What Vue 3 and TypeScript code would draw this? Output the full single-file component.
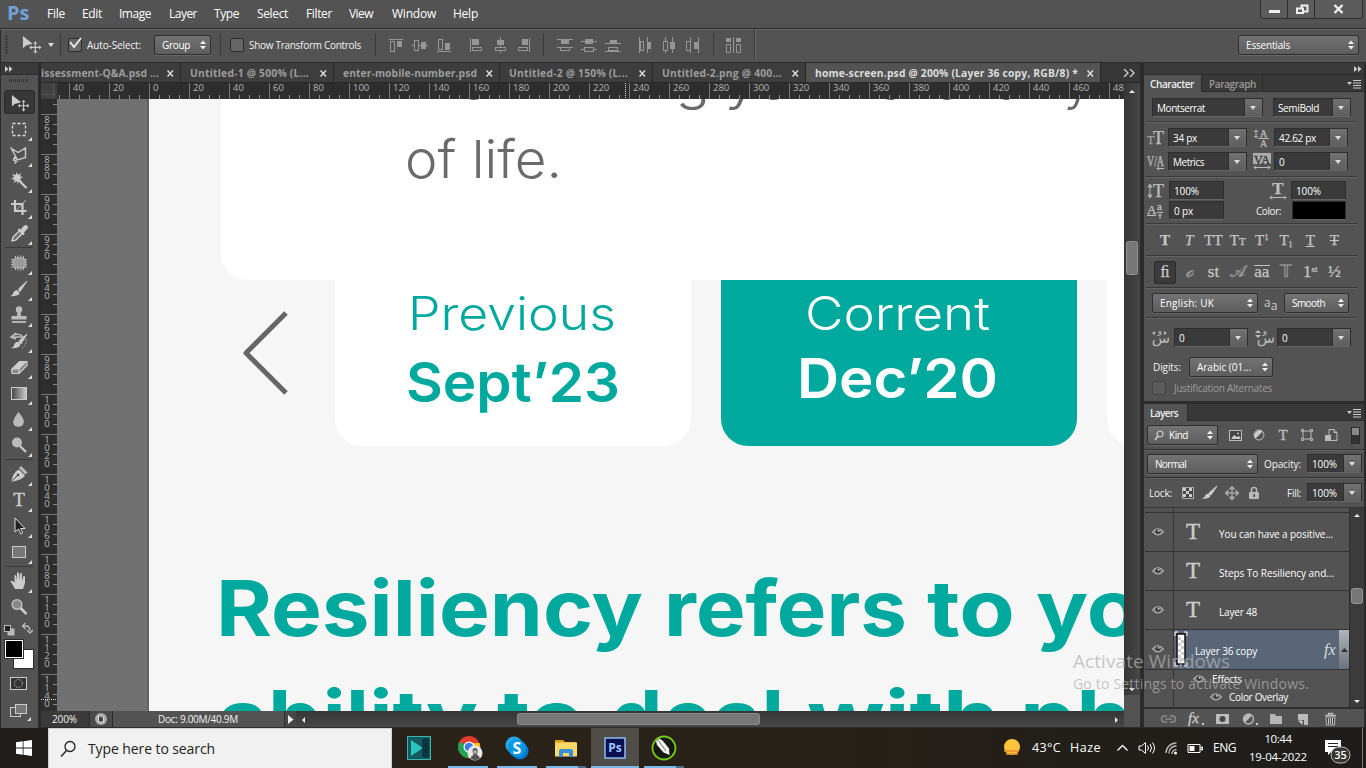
<script setup lang="ts">
import type { ObjectDirective } from 'vue'

// Adjusts tracking so a label occupies exactly the given width.
const vFit: ObjectDirective<HTMLElement, number> = {
  mounted(el, { value }) {
    const natural = el.getBoundingClientRect().width
    const count = (el.textContent ?? '').length
    if (count > 1) el.style.letterSpacing = `${(value - natural) / count}px`
  },
}

const menus = [
  { t: 'File', cell: 35, w: 18 }, { t: 'Edit', cell: 37, w: 20 }, { t: 'Image', cell: 50, w: 32 },
  { t: 'Layer', cell: 45, w: 28 }, { t: 'Type', cell: 43, w: 25 }, { t: 'Select', cell: 49, w: 31 },
  { t: 'Filter', cell: 43, w: 26 }, { t: 'View', cell: 43, w: 24 }, { t: 'Window', cell: 61, w: 44 },
  { t: 'Help', cell: 40, w: 25 },
]
const tabs = [
  { t: 'issessment-Q&A.psd ...', cell: 140, w: 118 },
  { t: 'Untitled-1 @ 500% (L...', cell: 153, w: 119 },
  { t: 'enter-mobile-number.psd', cell: 166, w: 134 },
  { t: 'Untitled-2 @ 150% (L...', cell: 153, w: 119 },
  { t: 'Untitled-2.png @ 400...', cell: 153, w: 120 },
  { t: 'home-screen.psd @ 200% (Layer 36 copy, RGB/8) *', cell: 295, w: 263 },
]
const hMajor = Array.from({ length: 27 }, (_, i) => ({ x: 28 + i * 40, t: String(Math.abs(i * 20 - 40)) }))
const hMinor = Array.from({ length: 108 }, (_, i) => 18 + i * 10)
const vMajor = Array.from({ length: 15 }, (_, i) => ({ y: 15 + i * 40, d: String(860 + i * 20).split('') }))
const vMinor = Array.from({ length: 61 }, (_, i) => 5 + i * 10)

// Artboard copy; len is the rendered advance of each word.
const words = [
  { t: 'Maximizing', x: 410, y: 99, len: 300, c: 'copy' }, { t: 'your', x: 725, y: 99, len: 121, c: 'copy' },
  { t: 'economy', x: 875, y: 99, len: 217, c: 'copy' }, { t: 'of life.', x: 405, y: 178, len: 157, c: 'copy' },
  { t: 'Previous', x: 408, y: 330, len: 208, c: 'label teal' }, { t: 'Corrent', x: 805, y: 330, len: 185, c: 'label white' },
  { t: 'Sept’23', x: 406, y: 402, len: 214, c: 'date teal' }, { t: 'Dec’20', x: 797, y: 398, len: 201, c: 'date white' },
  { t: 'Resiliency', x: 216, y: 636, len: 427, c: 'title' }, { t: 'refers', x: 664, y: 636, len: 243, c: 'title' },
  { t: 'to', x: 927, y: 636, len: 88, c: 'title' }, { t: 'yo', x: 1036, y: 636, len: 104, c: 'title' },
  { t: 'ability', x: 218, y: 746, len: 260, c: 'title' }, { t: 'to', x: 497, y: 746, len: 87, c: 'title' },
  { t: 'deal', x: 610, y: 746, len: 174, c: 'title' }, { t: 'with', x: 807, y: 746, len: 193, c: 'title' },
  { t: 'ph', x: 1020, y: 746, len: 112, c: 'title' },
]

const move = '<path d="M1 1v13l3.200-3 7 -1.800z" fill="#ccc"/><path d="M14 8v10M9 13h10" stroke="#ccc" stroke-width="1.200"/><path d="M14 6.600l2.200 2.400h-4.400zM14 19.400l2.200-2.400h-4.400zM7.600 13l2.400-2.200v4.400zM20.400 13l-2.400-2.200v4.400z" fill="#ccc"/>'
const tools: { k: string; svg: string; corner?: boolean; active?: boolean; sep?: string }[] = [
  { k: 'move', active: true, svg: move },
  { k: 'marquee', corner: true, svg: '<rect x="2.500" y="4.500" width="13" height="12" fill="none" stroke="#ddd" stroke-width="1.300" stroke-dasharray="3 2"/>' },
  { k: 'lasso', corner: true, svg: '<path d="M1.500 3.500l6.500 4 7.500-4.500v9.500l-8 2.500zM7 14.500l-2.500-2-1 2.500 3 1.500-2 2" fill="none" stroke="#ccc" stroke-width="1.400"/>' },
  { k: 'wand', corner: true, svg: '<path d="M7 1l1 3 3-2-1 3.500 3 .500-3 2 2 3-3.500-1L8 13l-1.500-3L4 12l.500-3.500L1 8l3-2-2-3 3.500 1z" fill="#ccc"/><path d="M9 9.500l7.500 7.500" stroke="#ccc" stroke-width="2.200"/>' },
  { k: 'crop', corner: true, svg: '<path d="M5 3v11h11.500M1 7h11.500v11" fill="none" stroke="#ccc" stroke-width="2.200"/><path d="M6 13.500L16 3" stroke="#bbb" stroke-width="1"/>' },
  { k: 'dropper', corner: true, svg: '<path d="M2 18l1-4 6.500-6.500 3 3-6.500 6.500z" fill="#777" stroke="#ddd" stroke-width="1.200"/><path d="M8.500 6l5.500 5.500M11 8l3.500-4.500q2-1 2.500 1L13 9" stroke="#ccc" stroke-width="2.200" fill="#ccc"/>' },
  { k: 'heal', corner: true, sep: 's1', svg: '<path d="M5.500 3v14M8 2.500v15M11 2.500v15M13.500 3v14M1 6.500h16M1 9h16M1 11.500h16M1 14h16" stroke="#bbb" stroke-width="1.100"/><rect x="3" y="5" width="12.500" height="10" rx="4" fill="#999" stroke="#bbb"/>' },
  { k: 'brush', corner: true, svg: '<path d="M17 2L8.500 10l1.500 2.500z" fill="#ccc" stroke="#ccc"/><path d="M8 11.500q2 2 1 4-4 2.500-9 1.500 3-1 3.500-3.500 1.500-3 4.500-2z" fill="#ccc"/>' },
  { k: 'stamp', corner: true, svg: '<circle cx="9" cy="4.500" r="3.200" fill="#bbb"/><path d="M7.500 6h3l.500 5h5.500v3.500h-15V11H7z" fill="#bbb"/><path d="M2 17h14" stroke="#ccc" stroke-width="1.600"/>' },
  { k: 'history', corner: true, svg: '<path d="M17 3l-8 7 2 3z" fill="#ccc" stroke="#ccc"/><path d="M9 11q2 2 1 4-4 3-9 2 3-1 3.500-4 1.500-3 4.500-2z" fill="#ccc"/><path d="M2 6h11q-3-4-9-2M6 2L1 6l5 2" fill="none" stroke="#bbb" stroke-width="1.500"/><path d="M16 8q1 6-4 9" stroke="#bbb" stroke-dasharray="1.500 1.500" fill="none"/>' },
  { k: 'eraser', corner: true, svg: '<path d="M1.500 12.500l8-8h7.500v4l-8 8H2z" fill="#888" stroke="#ccc" stroke-width="1.200"/><path d="M1.500 12.500l8-8h7.500l-8 8z" fill="#ccc"/><path d="M9 12.500v4" stroke="#ddd"/>' },
  { k: 'gradient', corner: true, svg: '<defs><linearGradient id="gr"><stop stop-color="#444"/><stop offset="1" stop-color="#ccc"/></linearGradient></defs><rect x="1.500" y="4.500" width="15" height="12" fill="url(#gr)" stroke="#ccc"/>' },
  { k: 'blur', corner: true, svg: '<path d="M8.500 3q6 7 5.200 10.500a5.300 5 0 0 1-10.500 0Q3 10 8.500 3z" fill="#bbb"/>' },
  { k: 'dodge', corner: true, svg: '<circle cx="7" cy="7.500" r="5" fill="#bbb"/><path d="M10 11l6 6" stroke="#ccc" stroke-width="2.200"/>' },
  { k: 'pen', corner: true, sep: 's2', svg: '<path d="M1 18Q3 8 9 5.500l6 6Q12 16 1 18z" fill="#ccc"/><path d="M1.500 17.500l6-6" stroke="#444"/><circle cx="8" cy="11" r="1.300" fill="#444"/><path d="M10 3l6.500 6.500" stroke="#bbb" stroke-width="3"/>' },
  { k: 'type', corner: true, svg: '<text x="9" y="16" text-anchor="middle" font-family="Liberation Serif, serif" font-size="19" fill="#d0d0d0" stroke="#d0d0d0" stroke-width=".3">T</text>' },
  { k: 'select', corner: true, svg: '<path d="M5 2v14l3.500-3 2.200 5 2-1-2-4.500H15z" fill="#222" stroke="#ddd"/>' },
  { k: 'shape', corner: true, svg: '<rect x="2.500" y="4.500" width="13" height="11" fill="#777" stroke="#ccc"/>' },
  { k: 'hand', corner: true, sep: 's3', svg: '<path d="M5 18Q3 14 .5 10.500q1-2 4 1V5q0-1.500 1.700-.5l.8 5V2q1-1.500 2 0v7l1-6.500q1.500-1 2 .5v7l1.500-5q1.500-.5 1.500 1V12l-2 6z" fill="#ccc"/>' },
  { k: 'zoom', svg: '<circle cx="7" cy="7.500" r="4.800" fill="#888" stroke="#bbb" stroke-width="1.600"/><path d="M10.500 11l6 6" stroke="#ccc" stroke-width="2.500"/>' },
]

const S = 'fill="none" stroke="#969696"'
const F = 'fill="#969696"'
const aligns = [
  [`<path d="M1 2.500h14" ${S}/><rect x="2.500" y="4.500" width="4" height="10" ${S}/><rect x="9" y="4" width="5" height="6" ${F}/>`,
   `<path d="M0 8.500h16" ${S}/><rect x="2.500" y="3.500" width="4" height="10" fill="#535353" stroke="#969696"/><rect x="9" y="5" width="5" height="7" ${F}/>`,
   `<path d="M1 14.500h14" ${S}/><rect x="2.500" y="2.500" width="4" height="10" ${S}/><rect x="9" y="6" width="5" height="7" ${F}/>`],
  [`<path d="M2.500 1v14" ${S}/><rect x="4" y="2" width="7" height="6" ${F}/><rect x="4.500" y="10.500" width="9" height="3" ${S}/>`,
   `<path d="M8.500 0v16" ${S}/><rect x="5" y="3" width="7" height="5" ${F}/><rect x="3.500" y="10.500" width="10" height="3" fill="#535353" stroke="#969696"/>`,
   `<path d="M13.500 1v14" ${S}/><rect x="6" y="2" width="6" height="6" ${F}/><rect x="2.500" y="10.500" width="9" height="3" ${S}/>`],
  [`<path d="M0 2.500h16M0 10.500h16" ${S}/><rect x="4" y="3" width="8" height="4" ${F}/><rect x="3.500" y="10.500" width="9" height="3" ${S}/>`,
   `<path d="M0 4.500h16M0 12.500h16" ${S}/><rect x="4" y="2" width="8" height="5" ${F}/><rect x="3.500" y="10.500" width="9" height="4" fill="#535353" stroke="#969696"/>`,
   `<path d="M0 6.500h16M0 14.500h16" ${S}/><rect x="5" y="3" width="7" height="4" ${F}/><rect x="3.500" y="10.500" width="9" height="3" ${S}/>`],
  [`<path d="M2.500 0v16M10.500 0v16" ${S}/><rect x="3.500" y="4.500" width="3" height="9" ${S}/><rect x="11" y="5" width="3" height="7" ${F}/>`,
   `<path d="M4.500 0v16M11.500 0v16" ${S}/><rect x="2.500" y="4.500" width="4" height="9" fill="#535353" stroke="#969696"/><rect x="9" y="5" width="5" height="7" ${F}/>`,
   `<path d="M5.500 0v16M13.500 0v16" ${S}/><rect x="1.500" y="4.500" width="4" height="9" ${S}/><rect x="9" y="5" width="4" height="7" ${F}/>`],
  [`<path d="M8.500 0v16" ${S}/><rect x="1" y="1" width="5" height="4" ${F}/><rect x="11" y="1" width="5" height="4" ${F}/><path d="M1.500 7.500h4v8h-4zM11.500 7.500h4v8h-4z" ${S}/>`],
]
const layers = [
  { t: 'You can have a positive...', w: 114 },
  { t: 'Steps To Resiliency and...', w: 115 },
  { t: 'Layer 48', w: 38 },
]
const filterIcons = [
  '<rect x="2.500" y="3.500" width="12" height="10" fill="#444" stroke="#bbb"/><path d="M4 12l3-4 3 2 2-1 2 3z" fill="#ccc"/><circle cx="11" cy="6.500" r="1" fill="#ccc"/>',
  '<circle cx="8" cy="8" r="5" fill="#555" stroke="#bbb"/><path d="M4.500 11.500A5 5 0 0 1 11.500 4.500z" fill="#ccc"/>',
  '<text x="8" y="13" text-anchor="middle" font-family="Liberation Serif" font-size="15" fill="#bbb" stroke="#bbb" stroke-width=".4">T</text>',
  '<path d="M4 4h8v8H4z" fill="none" stroke="#bbb"/><path d="M2.500 2.500h2v2h-2zM11.500 2.500h2v2h-2zM2.500 11.500h2v2h-2zM11.500 11.500h2v2h-2z" fill="#535353" stroke="#bbb"/>',
  '<path d="M6 8V2.500h5l3 3v8H8" fill="none" stroke="#bbb"/><path d="M11 2.500v3h3" fill="none" stroke="#bbb"/><rect x="2" y="8" width="6" height="6" fill="#bbb"/>',
]
const lockIcons = [
  '<rect x="2.500" y="2.500" width="11" height="11" fill="#444" stroke="#aaa"/><path d="M3 3h3v3H3zM9 3h3v3H9zM6 6h3v3H6zM3 9h3v3H3zM9 9h3v3H9z" fill="#ccc"/>',
  '<path d="M15 1L7 8l2 2z" fill="#ccc" stroke="#ccc"/><path d="M7 8.500q2 1.500 1 3.500-3 2.500-8 1.500 3-1 3.500-3.500 1.500-2 3.500-1.500z" fill="#ccc"/>',
  '<path d="M8 2v12M2 8h12" stroke="#bbb"/><path d="M8 1l2.500 3h-5zM8 15l2.500-3h-5zM1 8l3-2.500v5zM15 8l-3-2.500v5z" fill="none" stroke="#bbb"/>',
  '<path d="M5.500 7V4.500q0-2 2.500-2t2.500 2V7" fill="none" stroke="#bbb" stroke-width="1.500"/><rect x="3" y="7" width="10" height="7" rx="1" fill="#bbb"/><rect x="7.500" y="9" width="1.500" height="3" fill="#444"/>',
]
const footIcons = [
  '<path d="M7 5H4.500a3 3 0 0 0 0 6H7M10 5h2.500a3 3 0 0 1 0 6H10M5 8h7" fill="none" stroke="#8a8a8a" stroke-width="1.400"/>',
  '<text x="1" y="12" font-family="Liberation Serif" font-style="italic" font-size="15" fill="#ccc" stroke="#ccc" stroke-width=".3">fx</text><rect x="15" y="12" width="2" height="2" fill="#ccc"/>',
  '<rect x="2" y="3" width="13" height="10" fill="#bbb"/><circle cx="8.500" cy="8" r="3" fill="#444"/>',
  '<circle cx="7.500" cy="8" r="5" fill="#555" stroke="#bbb" stroke-width="1.300"/><path d="M4 11.500A5 5 0 0 1 11 4.500z" fill="#bbb"/><rect x="15" y="12" width="2" height="2" fill="#ccc"/>',
  '<path d="M2 13V3h5l1 2h6v8z" fill="#b5b5b5"/>',
  '<path d="M3 3h10v11H9v-5H3z" fill="#bbb"/><path d="M3 9.500h4.500V14z" fill="#ccc"/>',
  '<path d="M3 4.500h11M6.500 4V2.500h4V4" fill="none" stroke="#bbb" stroke-width="1.300"/><path d="M4 6h9l-.5 8h-8z" fill="#444" stroke="#bbb"/><path d="M6.500 7v6M8.500 7v6M10.500 7v6" stroke="#ccc"/>',
]
const eye = '<path d="M1.500 6Q7 -.5 12.500 6 7 12 1.500 6z" fill="#777" stroke="#b8b8b8" stroke-width="1.100"/><circle cx="7" cy="5.500" r="2.300" fill="#333"/><circle cx="7.600" cy="4.800" r="1" fill="#ddd"/>'

const serif = 'font-family="Liberation Serif, serif" fill="#c0c0c0" stroke="#c0c0c0" stroke-width=".25"'
const sizeIcon = `<text x="0" y="15" ${serif} font-size="12" opacity=".75">T</text><text x="6" y="15" ${serif} font-size="18">T</text>`
const leadIcon = `<text x="7" y="8" ${serif} font-size="10">A</text><text x="7" y="18" ${serif} font-size="10">A</text><path d="M3 2v6M1 3l2-2 2 2M1 7l2 2 2-2M5 9.500h11" fill="none" stroke="#bbb"/>`
const kernIcon = `<text x="0" y="13" ${serif} font-size="15" textLength="17" lengthAdjust="spacingAndGlyphs">V/A</text><path d="M10 15.500h7M12 13.500l-2 2 2 2" fill="none" stroke="#bbb"/>`
const trackIcon = `<rect x="0" y="0" width="18" height="11" fill="#aaa"/><text x="1" y="10.500" font-family="Liberation Serif" font-size="13" fill="#333" stroke="#333" stroke-width=".3" textLength="16" lengthAdjust="spacingAndGlyphs">VA</text><path d="M1 14.500h16M3 12.500l-2 2 2 2M15 12.500l2 2-2 2" fill="none" stroke="#bbb"/>`
const vscaleIcon = `<path d="M3 3v12M1 5l2-3 2 3zM1 13l2 3 2-3z" stroke="#bbb" fill="none"/><text x="6" y="15" ${serif} font-size="18">T</text>`
const hscaleIcon = `<text x="9" y="12" text-anchor="middle" ${serif} font-size="17" font-weight="bold">T</text><path d="M1 15.500h16M3 13.500l-2 2 2 2M15 13.500l2 2-2 2" fill="none" stroke="#bbb"/>`
const baseIcon = `<text x="0" y="12" ${serif} font-size="13">A</text><text x="10" y="8" ${serif} font-size="11">a</text><path d="M0 13.500h9M10 10.500h6M13 17v-5M11.500 14l1.500-2 1.500 2" fill="none" stroke="#bbb"/>`
const arab1 = '<text x="9" y="14" text-anchor="middle" font-family="DejaVu Sans" font-size="15" fill="#bbb">س</text><text x="8" y="5" text-anchor="middle" font-family="DejaVu Sans" font-size="9" fill="#bbb">و</text><path d="M0 4l3-2v4zM15 4l-3-2v4z" fill="#bbb"/>'
const arab2 = '<text x="11" y="14" text-anchor="middle" font-family="DejaVu Sans" font-size="15" fill="#bbb">س</text><text x="10" y="5" text-anchor="middle" font-family="DejaVu Sans" font-size="9" fill="#bbb">و</text><path d="M0 4h6l-3-3zM0 6h6l-3 3z" fill="#bbb"/>'
</script>

<template>
  <div class="screen">
    <header class="menubar">
      <span class="logo" v-fit="21">Ps</span>
      <div v-for="m in menus" :key="m.t" class="menu" :style="{ width: m.cell + 'px' }"><span v-fit="m.w">{{ m.t }}</span></div>
      <div class="wincontrols">
        <svg width="103" height="19"><path d="M.5 0v16q0 2.500 2.500 2.500h97q2.500 0 2.500-2.500V0" fill="#5c5c5c" stroke="#2e2e2e" /><path d="M27.500 0v18M54.500 0v18" stroke="#2e2e2e" /><path d="M9 11.500h11" stroke="#eee" stroke-width="3" /><path d="M41.500 5.500h6v6h-6z" fill="none" stroke="#eee" stroke-width="2" /><path d="M37 8.500h6v4.500h-6z" fill="#5c5c5c" stroke="#eee" stroke-width="2" /><path d="M74.500 5l8 8M82.500 5l-8 8" stroke="#eee" stroke-width="2.400" /></svg>
      </div>
    </header>

    <section class="options">
      <i class="grip"></i>
      <svg class="mv" width="20" height="20" viewBox="0 0 21 21" v-html="move" />
      <svg class="caret" width="7" height="4"><path d="M0 0h6L3 4z" fill="#ddd" /></svg>
      <i class="vsep a"></i>
      <span class="check"><svg width="14" height="14"><path d="M2 5l4 5 7-9" fill="none" stroke="#eee" stroke-width="1.800" /></svg></span>
      <span class="lab l1"><span v-fit="54">Auto-Select:</span></span>
      <span class="sel group"><span v-fit="28">Group</span><svg width="6" height="10"><path d="M0 4h6L3 .500zM0 6h6L3 9.500z" fill="#eee" /></svg></span>
      <i class="vsep b"></i>
      <span class="check c2"></span>
      <span class="lab l2"><span v-fit="112">Show Transform Controls</span></span>
      <i class="vsep c"></i>
      <template v-for="(g, gi) in aligns" :key="gi">
        <div class="agroup" :class="'g' + gi"><svg v-for="(s, i) in g" :key="i" width="16" height="16" v-html="s" /></div>
        <i v-if="gi === 1 || gi === 3" class="vsep g"></i>
      </template>
      <i class="vsep tall"></i>
      <span class="sel ess"><span v-fit="44">Essentials</span><svg width="6" height="10"><path d="M0 4h6L3 .500zM0 6h6L3 9.500z" fill="#eee" /></svg></span>
    </section>

    <main class="work">
      <aside class="toolbox">
        <div class="dockhead"><svg width="8" height="6"><path d="M0 0l3.500 3L0 6zM4 0l3.500 3L4 6z" fill="#ccc" /></svg></div>
        <i class="hgrip"></i>
        <div class="tools">
          <template v-for="t in tools" :key="t.k">
            <i v-if="t.sep" class="tsep" :class="t.sep"></i>
            <div class="tool" :class="{ active: t.active }">
              <svg :width="t.active ? 18 : 20" :height="t.active ? 18 : 20" viewBox="0 0 20 20" v-html="t.svg" />
              <svg v-if="t.corner" class="corner" width="4" height="4"><path d="M4 0v4H0z" fill="#ddd" /></svg>
            </div>
          </template>
        </div>
        <svg class="swatches" width="36" height="104">
          <rect x="6.500" y="6.500" width="7" height="7" fill="#bbb" /><rect x="3.500" y="3.500" width="6" height="6" fill="#222" stroke="#bbb" />
          <path d="M22 4h3q4 0 4 5M24.500 1l-3 3 3 3M26 8l3 3 3-3" fill="none" stroke="#bbb" stroke-width="1.300" />
          <rect x="12.500" y="27.500" width="20" height="19" fill="#fff" stroke="#2b2b2b" /><rect x="3" y="17" width="20" height="20" fill="#2b2b2b" /><rect x="4.500" y="18.500" width="17" height="17" fill="#000" stroke="#fff" />
          <rect x="9.500" y="55.500" width="16" height="12" fill="#333" stroke="#ccc" /><circle cx="17.500" cy="61.500" r="4" fill="none" stroke="#ddd" stroke-dasharray="1 1.500" />
          <rect x="9.500" y="85.500" width="10" height="9" fill="#555" stroke="#ccc" /><rect x="14.500" y="82.500" width="11" height="9" fill="#777" stroke="#ccc" /><path d="M30 95v4h-4z" fill="#ddd" />
        </svg>
      </aside>

      <section class="doc">
        <nav class="tabs">
          <div v-for="(t, i) in tabs" :key="i" class="tab" :class="{ on: i === 5, first: i === 0 }" :style="{ width: t.cell + 'px' }">
            <span v-fit="t.w">{{ t.t }}</span>
            <svg width="7" height="7"><path d="M.500 .500l5.500 6M6 .500l-5.500 6" stroke="#ddd" stroke-width="1.500" /></svg>
          </div>
          <svg class="more" width="12" height="8"><path d="M1 0l4 4-4 4M7 0l4 4-4 4" fill="none" stroke="#ccc" stroke-width="1.400" /></svg>
        </nav>
        <div class="grid">
          <svg class="hruler" width="1083" height="16">
            <rect width="1083" height="16" fill="#2e2e2e" /><rect width="16" height="16" fill="#404040" />
            <path v-for="x in hMinor" :key="x" :d="`M${x + .5} 12v4`" stroke="#8a8a8a" />
            <g v-for="m in hMajor" :key="m.x"><path :d="`M${m.x + .5} 0v16`" stroke="#777" /><text :x="m.x + 4" y="8" class="num">{{ m.t }}</text></g>
            <path d="M584.500 0v15" stroke="#ddd" stroke-dasharray="1 1" /><path d="M0 11.500h16M12.500 0v16" stroke="#666" stroke-dasharray="1 1" />
          </svg>
          <svg class="vruler" width="16" height="612">
            <rect width="16" height="612" fill="#2e2e2e" />
            <path v-for="y in vMinor" :key="y" :d="`M12 ${y + .5}h4`" stroke="#8a8a8a" />
            <g v-for="m in vMajor" :key="m.y"><path :d="`M0 ${m.y + .5}h16`" stroke="#777" /><text v-for="(c, i) in m.d" :key="i" x="6" :y="m.y + 9 + i * 8" text-anchor="middle" class="num">{{ c }}</text></g>
            <path d="M0 600.500h15" stroke="#ddd" stroke-dasharray="1 1" />
          </svg>
          <svg class="canvas" width="1067" height="612" viewBox="57 99 1067 612">
            <rect x="57" y="99" width="1067" height="612" fill="#717171" /><rect x="147" y="99" width="2" height="612" fill="#626262" />
            <rect x="149" y="99" width="975" height="612" fill="#f6f6f6" />
            <rect x="335" y="250" width="356" height="196" rx="27" fill="#fff" />
            <rect x="721" y="250" width="356" height="196" rx="27" fill="#00a99d" />
            <rect x="1107" y="250" width="356" height="196" rx="27" fill="#fff" />
            <rect x="221" y="50" width="1000" height="230" rx="26" fill="#fff" />
            <path d="M286 313L246 353l40 40" fill="none" stroke="#666" stroke-width="5" stroke-linejoin="round" />
            <text v-for="(w, i) in words" :key="i" class="word" :class="w.c" :x="w.x" :y="w.y" :textLength="w.len" lengthAdjust="spacingAndGlyphs">{{ w.t }}</text>
          </svg>
          <div class="vbar"><svg width="16" height="628"><path d="M5 10h6L8 7zM5 605h6l-3 3z" fill="#eee" /><rect x="2.500" y="158.500" width="11" height="33" rx="2" fill="#777" stroke="#929292" /><rect y="612" width="16" height="16" fill="#535353" /></svg></div>
        </div>
        <footer class="status">
          <span class="zoomv"><span v-fit="25">200%</span></span>
          <span class="info"><svg width="12" height="12"><circle cx="6" cy="6" r="6" fill="#aaa" /><path d="M3.500 3h3l2 2v4h-5z" fill="#444" stroke="#ddd" /></svg></span>
          <span class="docsize"><span v-fit="80">Doc: 9.00M/40.9M</span></span>
          <span class="arrow"><svg width="6" height="9"><path d="M0 0v9l5.500-4.500z" fill="#eee" /></svg></span>
          <div class="hbar"><svg width="828" height="16"><path d="M9 6v6l-3-3zM819 6v6l3-3z" fill="#eee" /><rect x="221.500" y="2.500" width="242" height="11" rx="2" fill="#777" stroke="#8c8c8c" /></svg></div>
          <i class="cornerbox"></i>
        </footer>
      </section>

      <aside class="panels">
        <div class="dockhead right"><svg width="8" height="6"><path d="M0 0l3.500 3L0 6zM4 0l3.500 3L4 6z" fill="#ccc" /></svg></div>
        <div class="ptabs">
          <span class="ptab on w58"><span v-fit="44">Character</span></span><span class="ptab w61"><span v-fit="47">Paragraph</span></span>
          <svg class="pm" width="15" height="9"><path d="M0 2h5L2.500 5z" fill="#ccc" /><path d="M6 .5h8M6 3h8M6 5.500h8M6 8h8" stroke="#ccc" /></svg>
        </div>
        <div class="charpanel">
          <div class="row r1"><span class="inp w111"><span v-fit="48">Montserrat</span><b></b></span><span class="inp w78"><span v-fit="41">SemiBold</span><b></b></span></div>
          <hr />
          <div class="row r2"><svg width="18" height="18" v-html="sizeIcon" /><span class="inp w80"><span v-fit="24">34 px</span><b></b></span><svg class="ic2" width="18" height="18" v-html="leadIcon" /><span class="inp w75"><span v-fit="37">42.62 px</span><b></b></span></div>
          <div class="row r3"><svg width="18" height="18" v-html="kernIcon" /><span class="inp w80"><span v-fit="31">Metrics</span><b></b></span><svg class="ic2" width="18" height="18" v-html="trackIcon" /><span class="inp w75"><span>0</span><b></b></span></div>
          <hr />
          <div class="row r4"><svg width="18" height="18" v-html="vscaleIcon" /><span class="inp w55"><span v-fit="25">100%</span></span><svg class="ic3" width="18" height="18" v-html="hscaleIcon" /><span class="inp w55 i4"><span v-fit="25">100%</span></span></div>
          <div class="row r5"><svg width="18" height="18" v-html="baseIcon" /><span class="inp w55"><span v-fit="19">0 px</span></span><span class="colorlab"><span v-fit="25">Color:</span></span><span class="inp black"></span></div>
          <hr />
          <div class="glyphs">
            <span><b>T</b></span><span><em>T</em></span><span>TT</span><span>T<small>T</small></span><span>T<sup>1</sup></span><span>T<sub>1</sub></span><span><u>T</u></span><span><s>T</s></span>
          </div>
          <hr />
          <div class="glyphs two">
            <span class="boxed">ﬁ</span><span class="dim"><em>ℴ</em></span><span>st</span><span class="dim">𝒜</span><span class="over">aa</span><span class="dim">𝕋</span><span>1<sup>st</sup></span><span>½</span>
          </div>
          <hr />
          <div class="row r6"><span class="sel lang"><span v-fit="54">English: UK</span><svg width="6" height="10"><path d="M0 4h6L3 .500zM0 6h6L3 9.500z" fill="#eee" /></svg></span><span class="aa">a<i>a</i></span><span class="sel smooth"><span v-fit="33">Smooth</span><svg width="6" height="10"><path d="M0 4h6L3 .500zM0 6h6L3 9.500z" fill="#eee" /></svg></span></div>
          <hr />
          <div class="row r7"><svg width="18" height="18" v-html="arab1" /><span class="inp w75"><span>0</span><b></b></span><svg class="ic7" width="20" height="18" v-html="arab2" /><span class="inp w75"><span>0</span><b></b></span></div>
          <div class="row r8"><span class="lab"><span v-fit="28">Digits:</span></span><span class="sel digits"><span v-fit="54">Arabic (01...</span><svg width="6" height="10"><path d="M0 4h6L3 .500zM0 6h6L3 9.500z" fill="#eee" /></svg></span></div>
          <div class="row r9"><span class="check off"></span><span class="just"><span v-fit="98">Justification Alternates</span></span></div>
        </div>

        <div class="ptabs lay">
          <span class="ptab on w44"><span v-fit="28">Layers</span></span>
          <svg class="pm" width="15" height="9"><path d="M0 2h5L2.500 5z" fill="#ccc" /><path d="M6 .5h8M6 3h8M6 5.500h8M6 8h8" stroke="#ccc" /></svg>
        </div>
        <div class="band b1">
          <span class="sel kind"><svg width="11" height="11"><circle cx="6" cy="4" r="3" fill="none" stroke="#ccc" stroke-width="1.200" /><path d="M4 6L1 10" stroke="#ccc" stroke-width="1.500" /></svg><span v-fit="19">Kind</span><svg class="ud" width="6" height="10"><path d="M0 4h6L3 .500zM0 6h6L3 9.500z" fill="#eee" /></svg></span>
          <div class="ficons"><svg v-for="(s, i) in filterIcons" :key="i" width="16" height="16" v-html="s" /></div>
          <i class="switch"></i>
        </div>
        <div class="band b2"><span class="sel normal"><span v-fit="31">Normal</span><svg width="6" height="10"><path d="M0 4h6L3 .500zM0 6h6L3 9.500z" fill="#eee" /></svg></span><span class="lab op"><span v-fit="37">Opacity:</span></span><span class="inp w55"><span v-fit="25">100%</span><b></b></span></div>
        <div class="band b3"><span class="lab lk"><span v-fit="23">Lock:</span></span><div class="licons"><svg v-for="(s, i) in lockIcons" :key="i" width="16" height="16" v-html="s" /></div><span class="lab fl"><span v-fit="14">Fill:</span></span><span class="inp w55"><span v-fit="25">100%</span><b></b></span></div>
        <div class="layers">
          <div class="list">
            <div class="lrow stub"><i class="eyecell"></i></div>
            <div v-for="l in layers" :key="l.t" class="lrow"><span class="eyecell"><svg width="14" height="12" v-html="eye" /></span><span class="bigt">T</span><span class="lname"><span v-fit="l.w">{{ l.t }}</span></span></div>
            <div class="lrow selrow">
              <span class="eyecell"><svg width="14" height="12" v-html="eye" /></span>
              <div class="fill"><svg width="14" height="37"><path d="M1 5V1h3M10 1h3v4M1 31v4h3M10 35h3v-4" fill="none" stroke="#fff" /><rect x="3" y="3" width="8" height="30" fill="#fff" stroke="#111" stroke-width="1.500" /><path d="M4 6h3v3H4zM7 9h3v3H7zM4 12h3v3H4zM7 15h3v3H7zM4 18h3v3H4zM7 21h3v3H7zM4 24h3v3H4zM7 27h3v3H7z" fill="#ccc" /></svg><span class="sname"><span v-fit="62">Layer 36 copy</span></span><em class="fx">fx</em><span class="twist"><svg width="7" height="4"><path d="M0 4h7L3.500 0z" fill="#333" /></svg></span></div>
            </div>
            <div class="effects"><i class="eyecell"></i><div class="fxlist"><div class="e1"><svg width="14" height="12" v-html="eye" /><span v-fit="30">Effects</span></div><div class="e2"><svg width="14" height="12" v-html="eye" /><span v-fit="59">Color Overlay</span></div></div></div>
          </div>
          <svg class="lbar" width="14" height="199"><path d="M4 9h6L7 6zM4 192h6l-3 3z" fill="#eee" /><rect x="1.500" y="80.500" width="11" height="15" rx="2" fill="#777" stroke="#939393" /></svg>
        </div>
        <div class="pfoot"><svg v-for="(s, i) in footIcons" :key="i" width="18" height="16" v-html="s" /></div>
      </aside>
    </main>

    <footer class="taskbar">
      <div class="start"><svg width="16" height="16"><path d="M0 2.300l6.700-1v6.300H0zM7.500 1.200L16 0v7.600H7.500zM0 8.400h6.700v6.300l-6.700-1zM7.500 8.400H16V16l-8.500-1.200z" fill="#fff" /></svg></div>
      <div class="search"><svg width="18" height="18"><circle cx="11" cy="6.500" r="5" fill="none" stroke="#222" stroke-width="1.300" /><path d="M7.500 10.500L2 16.500" stroke="#222" stroke-width="1.400" /></svg><span v-fit="127">Type here to search</span></div>
      <div class="apps">
        <div class="app plain"><svg width="24" height="24"><rect x=".5" y=".5" width="23" height="23" fill="#125a60" stroke="#39b8ae" /><path d="M4 4l12 8-12 8z" fill="#2cc3ba" /><path d="M18.500 2v20M16 4h5v4h-5zM16 10h5v4h-5zM16 16h5v4h-5z" fill="none" stroke="#0b2b31" stroke-width="1.500" /></svg></div>
        <div class="app run"><svg class="chrome" width="26" height="26"><circle cx="12" cy="12" r="11" fill="#e33b2e" /><path d="M12 12L2.500 6.500A11 11 0 0 0 11 23z" fill="#21a453" /><path d="M12 12l-1 11A11 11 0 0 0 22.500 8H12z" fill="#fbc116" /><circle cx="12" cy="12" r="5.500" fill="#fff" /><circle cx="12" cy="12" r="4.300" fill="#3b7de8" /><circle cx="18" cy="18" r="7.500" fill="#e9e9e9" /><path d="M13.500 23.500q.5-3 3-3.500-2.500-7 1.500-7 4 0 2 7 2.500.5 3 3.500-5 3-9.500 0z" fill="#555" /><circle cx="18" cy="17" r="2" fill="#aaa" /></svg></div>
        <div class="app run"><svg class="skype" width="24" height="24"><circle cx="9" cy="9" r="8.500" fill="#28a8ea" /><circle cx="15" cy="15" r="8.500" fill="#0078d4" /><circle cx="12" cy="12" r="9" fill="#0796df" /><text x="12" y="18" text-anchor="middle" font-family="Open Sans" font-weight="700" font-size="16" fill="#fff">S</text></svg></div>
        <div class="app run two"><svg width="24" height="24"><path d="M1 4h8l2 2h11v4H1z" fill="#e39b17" /><rect x="1" y="6.500" width="22" height="14" fill="#ffd867" /><path d="M5 21v-6q0-2 2-2h10q2 0 2 2v6h-4v-4H9v4z" fill="#3a8ed8" /></svg></div>
        <div class="app run cur"><svg width="22" height="22"><rect x="1" y="1" width="20" height="20" fill="#0b0f4f" stroke="#8cbcf8" stroke-width="1.500" /><text x="11" y="15" text-anchor="middle" font-family="Open Sans" font-weight="700" font-size="12" fill="#9cc8ff">Ps</text></svg></div>
        <div class="app run two"><svg width="26" height="26"><circle cx="13" cy="13" r="11.500" fill="#151a10" stroke="#78c41c" stroke-width="1.800" /><path d="M5 6l3.500-2.500L12 6l6 7.500 .5 6.500-6-2.500-6.500-7.500z" fill="#f1f1f1" /><path d="M7 5l8 11" stroke="#777" /></svg></div>
      </div>
      <div class="tray">
        <svg class="sun" width="20" height="20"><circle cx="10" cy="9" r="8" fill="#ffc43a" /><path d="M2 13h15M4 16h12" stroke="#e88b2c" stroke-width="1.500" /></svg>
        <span class="temp"><span v-fit="29">43°C</span></span><span class="haze"><span v-fit="31">Haze</span></span>
        <svg class="sys" width="92" height="20"><path d="M.5 12.500L5.500 7.500l5 5" fill="none" stroke="#fff" stroke-width="1.300" /><path d="M22 8h2.500l4-3.500v11l-4-3.500H22z" fill="none" stroke="#fff" /><path d="M30.500 7.500q2 2.500 0 5M33 6q3 4 0 8M35.500 4.500q4 5.500 0 11" fill="none" stroke="#fff" /><path d="M49 15A10 10 0 0 1 59.500 5M52 15.500A7 7 0 0 1 59.500 8M55 16A4.500 4.500 0 0 1 59.500 11.500" fill="none" stroke="#bbb" stroke-width="1.400" /><circle cx="58.500" cy="15" r="1.500" fill="#fff" /><path d="M71 6.500h12v8H71zM84 9h1.500v3H84z" fill="none" stroke="#fff" /><rect x="72.500" y="8" width="5" height="5" fill="#fff" /></svg>
        <span class="eng"><span v-fit="23">ENG</span></span>
        <div class="clock"><div><span v-fit="27">10:44</span></div><div><span v-fit="58">19-04-2022</span></div></div>
        <svg class="note" width="30" height="28"><path d="M1 4h16v12H7l-3 3v-3H1z" fill="#fff" /><path d="M4 7.500h10M4 10.500h10" stroke="#222" /><rect x="7" y="11" width="19" height="16" rx="8" fill="#37352f" stroke="#bbb" /><text x="16.500" y="23" text-anchor="middle" font-family="Open Sans" font-weight="600" font-size="11" fill="#fff">35</text></svg>
        <i class="peek"></i>
      </div>
    </footer>

    <div class="watermark"><div class="wm1"><span v-fit="157">Activate Windows</span></div><div class="wm2"><span v-fit="236">Go to Settings to activate Windows.</span></div></div>
  </div>
</template>

<style>
body { overflow: hidden; background: #535353; }
</style>
<style scoped>
* { box-sizing: border-box; }
.screen { width: 1366px; height: 768px; position: relative; overflow: hidden; display: flex; flex-direction: column; background: #535353; color: #f2f2f2; font: 500 10px/14px "Open Sans", "Noto Sans", sans-serif; white-space: nowrap; }
svg { display: block; flex: none; }
span { display: inline-block; }
i { display: block; flex: none; font-style: normal; }
.menubar { height: 29px; display: flex; align-items: center; border-bottom: 1px solid #2b2b2b; padding-left: 7px; flex: none; }
.logo { font: 700 20px/20px "Open Sans", sans-serif; color: #6fa1d8; margin: -2px 19px 0 0; width: 21px; }
.menu { font: 400 12px/16px "Open Sans", sans-serif; color: #fff; flex: none; }
.wincontrols { margin-left: auto; margin-right: 3px; align-self: flex-start; }
.options { height: 34px; flex: none; display: flex; align-items: center; border-top: 1px solid #666; border-bottom: 1px solid #2b2b2b; border-left: 1px solid #2b2b2b; padding: 0 7px 3px 4px; }
.grip { width: 3px; height: 20px; background: repeating-linear-gradient(#333 0 1px, #555 1px 2px); }
.mv { margin-left: 14px; }
.caret { margin-left: 6px; }
.vsep { width: 1px; height: 23px; background: #3a3a3a; }
.vsep.a { margin: 0 7px 0 5px; }
.check { width: 14px; height: 14px; flex: none; border: 1px solid #2c2c2c; border-radius: 2px; background: #666; }
.check svg { margin: -2px 0 0 -1px; }
.l1 { margin-left: 5px; width: 67px; }
.sel { height: 20px; flex: none; display: flex; align-items: center; justify-content: space-between; border: 1px solid #2f2f2f; border-radius: 2px; background: linear-gradient(#737373, #5d5d5d); box-shadow: 0 1px 0 #666; padding: 0 4px 0 7px; color: #fff; }
.group { width: 57px; }
.vsep.b { margin: 0 9px 0 9px; }
.l2 { margin-left: 5px; width: 126px; }
.agroup { display: flex; gap: 8px; }
.g0 { margin-left: 12px; } .g1 { margin: 0 11px 0 16px; } .g2 { margin-left: 13px; } .g3 { margin: 0 12px 0 16px; } .g4 { margin-left: 11px; }
.vsep.tall { height: 31px; margin-left: 13px; box-shadow: 1px 0 #6a6a6a; }
.ess { width: 121px; margin-left: auto; }
.work { height: 665px; flex: none; display: flex; }
.toolbox { width: 41px; flex: none; border-left: 1px solid #2b2b2b; border-right: 3px solid #2b2b2b; background: #535353; }
.dockhead { height: 12px; flex: none; background: #3a3a3a; border-bottom: 1px solid #2b2b2b; padding: 3px 0 0 4px; }
.dockhead.right { padding-left: 210px; }
.hgrip { width: 20px; height: 3px; margin: 4px 0 8px 8px; background: repeating-linear-gradient(90deg, #333 0 1px, #555 1px 2px); }
.tool { height: 26px; padding: 3px 0 0 9px; position: relative; }
.tool.active { background: #373737; border: 1px solid #2b2b2b; border-radius: 3px; width: 31px; height: 24px; margin: 0 0 2px 3px; padding: 3px 0 0 6px; }
.corner { position: absolute; left: 27px; top: 21px; }
.tsep { height: 1px; background: #383838; margin: 1px 5px 1px 4px; }
.tsep.s1 { margin-bottom: 2px; }
.swatches { margin-top: 2px; }
.doc { width: 1099px; flex: none; border-bottom: 1px solid #2b2b2b; }
.tabs { height: 20px; display: flex; background: #373737; border-bottom: 1px solid #282828; }
.tab { flex: none; display: flex; align-items: center; justify-content: space-between; font-weight: 700; font-size: 10.300px; color: #9c9c9c; padding: 1px 6px 0 9px; border-right: 1px solid #282828; background: #3d3d3d; }
.tab.first { padding-left: 0; }
.tab.on { background: #535353; color: #ddd; }
.more { margin: 6px 0 0 22px; }
.grid { display: grid; grid-template-columns: 16px 1067px 16px; grid-template-rows: 16px 612px; }
.hruler { grid-column: 1 / 3; }
.vbar { grid-column: 3; grid-row: 1 / 3; background: linear-gradient(90deg, #363636, #474747); height: 628px; }
.num { font: 400 9.500px "Open Sans", sans-serif; fill: #b4b4b4; }
.word { font-family: Inter, sans-serif; }
.copy { font-size: 52px; font-weight: 300; fill: #6a6a6a; }
.label { font-size: 46px; font-weight: 300; }
.date { font-size: 55px; font-weight: 600; }
.title { font-size: 77px; font-weight: 700; fill: #00a99d; }
.teal { fill: #00a99d; } .white { fill: #fff; }
.status { height: 16px; display: flex; background: #3a3a3a; }
.status > span { display: flex; align-items: center; }
.zoomv { width: 48px; padding-left: 11px; }
.info { width: 23px; padding-left: 5px; background: #4a4a4a; border-left: 1px solid #2b2b2b; }
.docsize { width: 172px; padding-left: 45px; background: #535353; border-left: 1px solid #2b2b2b; }
.arrow { width: 12px; padding-left: 3px; background: #474747; border-left: 1px solid #2b2b2b; }
.hbar { width: 828px; background: linear-gradient(#363636, #474747); }
.cornerbox { width: 16px; background: #535353; }
.panels { width: 226px; flex: none; border-left: 4px solid #2b2b2b; border-right: 2px solid #2b2b2b; background: #535353; display: flex; flex-direction: column; }
.ptabs { height: 17px; flex: none; background: #393939; display: flex; border-bottom: 1px solid #2b2b2b; }
.ptab { height: 17px; flex: none; color: #999; font-weight: 600; padding: 2px 0 0 6px; border-right: 1px solid #2b2b2b; }
.ptab.on { background: #535353; color: #eee; }
.w58 { width: 58px; } .w61 { width: 61px; padding-left: 7px; } .w44 { width: 44px; }
.pm { margin: 5px 2px 0 auto; }
.charpanel { height: 312px; flex: none; border-bottom: 3px solid #2b2b2b; padding-left: 3px; }
.row { display: flex; align-items: center; }
hr { border: 0; height: 2px; width: 211px; margin: 0 0 0 -1px; background: #3a3a3a; border-bottom: 1px solid #646464; flex: none; }
.inp { height: 19px; flex: none; display: flex; align-items: center; background: #3a3a3a; border: 1px solid #2e2e2e; border-bottom-color: #666; padding-left: 4px; color: #fff; }
.inp b { width: 18px; height: 17px; margin-left: auto; border-left: 1px solid #2e2e2e; background: linear-gradient(#717171, #5e5e5e); position: relative; }
.inp b::after { content: ""; position: absolute; left: 5px; top: 7px; border: 3px solid transparent; border-top: 4px solid #ddd; border-bottom: 0; }
.w111 { width: 111px; } .w78 { width: 78px; } .w80 { width: 79px; } .w75 { width: 74px; } .w55 { width: 55px; }
.r1 { padding: 6px 0 4px 5px; gap: 10px; }
.r2 { padding: 5px 0 0; } .r2 svg + span, .r3 svg + span { margin-left: 3px; }
.r3 { padding: 5px 0 5px; }
.r2 .ic2, .r3 .ic2 { margin-left: 6px; }
.r4 { padding: 3px 0 1px; } .r4 svg + span, .r5 svg + span { margin-left: 4px; }
.ic3 { margin-left: 45px; } .r4 .ic3 + span { margin-left: 4px; }
.r5 { padding-bottom: 3px; }
.colorlab { width: 36px; margin-left: 32px; } .black { width: 54px; background: #000; }
.glyphs { display: grid; grid-template-columns: repeat(8, 24.200px); height: 30px; align-items: center; font: 15px/20px "Liberation Serif", serif; color: #c8c8c8; padding-left: 6px; text-align: center; -webkit-text-stroke: .25px #c8c8c8; }
.glyphs.two { height: 30px; font-size: 17px; }
.glyphs span { line-height: 20px; }
.glyphs small { font-size: 11px; }
.glyphs sup { font-size: 9px; line-height: 0; vertical-align: 5px; } .glyphs sub { font-size: 8px; line-height: 0; vertical-align: -2px; }
.dim { opacity: .6; }
.glyphs .boxed { width: 22px; height: 23px; margin-left: 1px; background: #3a3a3a; border: 1px solid #2b2b2b; border-radius: 2px; }
.over { position: relative; } .over::before { content: ""; position: absolute; left: 4px; right: 4px; top: 3px; height: 1px; background: #c4c4c4; }
.r6 { padding: 4px 0 4px 5px; } .lang { width: 106px; } .smooth { width: 65px; margin-left: 6px; }
.aa { width: 14px; margin-left: 6px; color: #ccc; font-size: 12px; display: flex; align-items: center; } .aa i { margin-top: 5px; }
.r7 { padding: 9px 0 0 5px; } .r7 .inp { margin-left: 4px; } .ic7 { margin-left: 7px; } .r7 .ic7 + .inp { margin-left: 2px; }
.r8 { padding: 10px 0 0 6px; } .digits { width: 84px; margin-left: 8px; }
.r9 { padding: 4px 0 0 5px; } .check.off { background: #5b5b5b; border-color: #444; } .just { margin-left: 8px; color: #9b9b9b; }
.band { flex: none; display: flex; align-items: center; border-bottom: 1px solid #333; box-shadow: 0 1px #606060; padding-left: 3px; }
.b1 { height: 29px; } .b2 { height: 28px; } .b3 { height: 30px; }
.kind { width: 71px; padding-left: 6px; gap: 4px; } .ud { margin-left: auto; }
.ficons { display: flex; gap: 8px; margin-left: 9px; }
.switch { width: 9px; height: 17px; margin-left: 12px; background: linear-gradient(#888 0 7px, #333 7px); border: 1px solid #2b2b2b; }
.normal { width: 111px; } .op { width: 43px; margin-left: 6px; }
.lk { margin-left: 2px; width: 31px; } .licons { display: flex; gap: 6px; } .fl { width: 20px; margin-left: 25px; }
.layers { display: flex; height: 199px; flex: none; background: #3b3b3b; }
.list { width: 206px; background: #535353; border-right: 1px solid #2e2e2e; overflow: hidden; padding-left: 1px; flex: none; }
.lrow { height: 39px; display: flex; align-items: center; border-bottom: 1px solid #333; }
.stub { height: 5px; }
.eyecell { width: 29px; align-self: stretch; border-right: 1px solid #363636; padding: 13px 0 0 6px; flex: none; }
.bigt { width: 38px; text-align: center; font: 23px/30px "Liberation Serif", serif; color: #ccc; -webkit-text-stroke: .4px #ccc; }
.lname { margin-left: 7px; padding-top: 3px; color: #fff; }
.selrow { height: 40px; }
.fill { flex: 1; height: 39px; background: #596678; display: flex; align-items: center; }
.sname { margin-left: 7px; padding-top: 3px; width: 129px; color: #fff; }
.fx { font: italic 16px/16px "Liberation Serif", serif; width: 15px; color: #ddd; }
.twist { margin-left: auto; width: 10px; align-self: stretch; background: linear-gradient(#b0b5bb, #69737f); padding: 18px 0 0 2px; }
.effects { display: flex; height: 37px; } .fxlist > div { display: flex; align-items: center; height: 18px; gap: 6px; color: #fff; }
.e1 { padding-left: 18px; } .e2 { padding-left: 35px; }
.pfoot { flex: 1; display: flex; gap: 9px; padding: 2px 0 0 16px; border-top: 2px solid #2e2e2e; border-bottom: 1px solid #2b2b2b; }
.taskbar { flex: none; height: 40px; display: flex; background: linear-gradient(90deg, #211e1b, #2a2319 40%, #262017 60%, #1e1d1b); }
.start { width: 48px; display: grid; place-items: center; }
.search { width: 344px; background: #f1f1f1; border: 1px solid #cfcfcf; border-bottom: 0; display: flex; align-items: center; padding-left: 10px; gap: 11px; font: 400 14px/20px "Open Sans", sans-serif; color: #222; }
.apps { display: flex; margin-left: 3px; gap: 1px; }
.app { width: 48px; height: 40px; display: grid; place-items: center; position: relative; }
.chrome { margin-left: 3px; }
.skype { margin-right: 1px; }
.app.run::after { content: ""; position: absolute; left: 4px; right: 4px; bottom: 0; height: 2px; background: #76b9ed; }
.app.cur { background: #504d48; } .app.cur::after { left: 0; right: 0; }
.app.two::after { background: linear-gradient(90deg, #76b9ed 32px, #4a6f8e 32px); }
.tray { display: flex; align-items: center; margin-left: auto; font: 400 12.500px/18px "Open Sans", sans-serif; color: #fff; }
.temp { margin-left: 10px; width: 38px; } .haze { width: 47px; } .eng { width: 36px; margin-left: 4px; font-size: 12px; }
.clock { width: 58px; text-align: center; font-size: 11.500px; }
.note { margin: 3px 0 0 17px; } .peek { width: 1px; height: 40px; background: #777; margin: 0 3px 0 8px; }
.watermark { position: absolute; left: 1073px; top: 649px; color: rgba(178, 178, 178, .72); font-weight: 400; }
.wm1 { font-size: 19px; line-height: 25px; } .wm2 { font-size: 14px; line-height: 20px; }
</style>
